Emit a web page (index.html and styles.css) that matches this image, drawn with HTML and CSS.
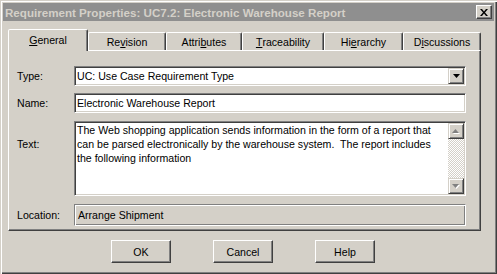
FILE: index.html
```html
<!DOCTYPE html>
<html>
<head>
<meta charset="utf-8">
<title>Requirement Properties</title>
<link rel="stylesheet" href="styles.css">
</head>
<body>
<div class="window">
  <div class="titlebar">
    <span class="title">Requirement Properties: UC7.2: Electronic Warehouse Report</span>
    <span class="close-btn">
      <svg width="8" height="7" viewBox="0 0 8 7"><path d="M0 0h2l2 2.5 2-2.5h2l-3 3.5 3 3.5h-2l-2-2.5-2 2.5h-2l3-3.5z" fill="#000"/></svg>
    </span>
  </div>
  <div class="tabs">
    <div class="tab tab--active tab--general"><span class="u">G</span>eneral</div>
    <div class="tab tab--revision">Re<span class="u">v</span>ision</div>
    <div class="tab tab--attributes">Attri<span class="u">b</span>utes</div>
    <div class="tab tab--traceability"><span class="u">T</span>raceability</div>
    <div class="tab tab--hierarchy">Hi<span class="u">e</span>rarchy</div>
    <div class="tab tab--discussions">D<span class="u">i</span>scussions</div>
  </div>
  <div class="panel">
    <div class="row row--type">
      <span class="label">Type:</span>
      <div class="field combo">
        <span class="combo-text">UC: Use Case Requirement Type</span>
        <span class="arrow-btn">
          <svg width="7" height="4" viewBox="0 0 7 4"><path d="M0 0h7l-3.5 4z" fill="#000"/></svg>
        </span>
      </div>
    </div>
    <div class="row">
      <span class="label">Name:</span>
      <div class="field input">Electronic Warehouse Report</div>
    </div>
    <div class="row row--text">
      <span class="label label--text">Text:</span>
      <div class="field memo">
        <div class="memo-body">
          <div>The Web shopping application sends information in the form of a report that</div>
          <div>can be parsed electronically by the warehouse system.&nbsp; The report includes</div>
          <div>the following information</div>
        </div>
        <div class="scrollbar">
          <span class="arrow-btn arrow-btn--scroll">
            <svg width="8" height="5" viewBox="0 0 8 5"><path d="M1 5h7l-3.5-4z" fill="#fff"/><path d="M0 4h7l-3.5-4z" fill="#808080"/></svg>
          </span>
          <span class="track"></span>
          <span class="arrow-btn arrow-btn--scroll">
            <svg width="8" height="5" viewBox="0 0 8 5"><path d="M1 1h7l-3.5 4z" fill="#fff"/><path d="M0 0h7l-3.5 4z" fill="#808080"/></svg>
          </span>
        </div>
      </div>
    </div>
    <div class="row">
      <span class="label">Location:</span>
      <div class="static">Arrange Shipment</div>
    </div>
  </div>
  <div class="buttons">
    <button class="btn">OK</button>
    <button class="btn">Cancel</button>
    <button class="btn">Help</button>
  </div>
</div>
</body>
</html>
```
FILE: styles.css
```css
html, body {
  margin: 0;
  background: #d4d0c8;
}
body {
  font-family: "Liberation Sans", Arial, sans-serif;
  font-size: 10.6px;
  color: #000;
}
.window {
  width: 497px;
  height: 274px;
  box-sizing: border-box;
  padding: 3px;
  background: #d4d0c8;
  box-shadow: inset 1px 1px #d4d0c8, inset 2px 2px #fff, inset -1px -1px #404040, inset -2px -2px #808080;
  display: flex;
  flex-direction: column;
}
.titlebar {
  height: 18px;
  background: #8f8f8f;
  display: flex;
  align-items: center;
  padding: 0 2px 0 2px;
}
.title {
  flex: 1;
  font-weight: bold;
  font-size: 11.6px;
  color: #d4d0c8;
  white-space: nowrap;
}
.close-btn {
  width: 16px;
  height: 14px;
  box-sizing: border-box;
  background: #d4d0c8;
  border: 1px solid;
  border-color: #fff #404040 #404040 #fff;
  box-shadow: inset -1px -1px #808080;
  display: flex;
  align-items: center;
  justify-content: center;
}
.tabs {
  display: flex;
  align-items: flex-end;
  height: 21px;
  margin: 8px 0 0 5px;
}
.tab {
  height: 18px;
  box-sizing: border-box;
  border: 1px solid;
  border-bottom: none;
  border-color: #fff #404040 transparent #fff;
  box-shadow: inset -1px 0 #808080;
  border-radius: 2px 2px 0 0;
  display: flex;
  align-items: center;
  justify-content: center;
  padding-top: 1px;
  white-space: nowrap;
}
.tab--active {
  height: 22px;
  margin-bottom: -1px;
  position: relative;
  z-index: 1;
  background: #d4d0c8;
  padding-top: 0;
  padding-bottom: 2px;
}
.tab--general { width: 80px; }
.tab--revision { width: 78px; }
.tab--attributes { width: 76px; }
.tab--traceability { width: 82px; }
.tab--hierarchy { width: 79px; }
.tab--discussions { width: 78px; }
.u { text-decoration: underline; }
.panel {
  margin-left: 5px;
  width: 473px;
  height: 181px;
  box-sizing: border-box;
  border: 1px solid;
  border-color: #fff #404040 #404040 #fff;
  box-shadow: inset -1px -1px #808080;
  padding: 15px 0 0 8px;
  display: flex;
  flex-direction: column;
  gap: 8px;
}
.row {
  display: flex;
  align-items: center;
}
.row--type { margin-bottom: -1px; }
.row--text { align-items: flex-start; }
.label {
  width: 57px;
  flex: none;
}
.label--text {
  padding-top: 16px;
  line-height: 14px;
}
.field {
  width: 392px;
  box-sizing: border-box;
  border: 1px solid;
  border-color: #808080 #fff #fff #808080;
  box-shadow: inset 1px 1px #404040, inset -1px -1px #d4d0c8;
  background: #fff;
  padding: 1px;
}
.combo {
  height: 20px;
  display: flex;
  align-items: center;
}
.combo-text {
  flex: 1;
  padding-left: 1px;
  white-space: nowrap;
}
.arrow-btn {
  width: 16px;
  height: 16px;
  box-sizing: border-box;
  background: #d4d0c8;
  border: 1px solid;
  border-color: #d4d0c8 #404040 #404040 #d4d0c8;
  box-shadow: inset 1px 1px #fff, inset -1px -1px #808080;
  display: flex;
  align-items: center;
  justify-content: center;
  flex: none;
}
.input {
  height: 20px;
  display: flex;
  align-items: center;
  padding-left: 2px;
  white-space: nowrap;
}
.memo {
  height: 75px;
  display: flex;
}
.memo-body {
  flex: 1;
  line-height: 14px;
  padding-left: 1px;
  white-space: nowrap;
  overflow: hidden;
}
.scrollbar {
  width: 16px;
  display: flex;
  flex-direction: column;
}
.track {
  flex: 1;
  background: repeating-conic-gradient(#fff 0 25%, #d4d0c8 0 50%) 0 0 / 2px 2px;
}
.static {
  width: 392px;
  height: 22px;
  box-sizing: border-box;
  border: 1px solid;
  border-color: #808080 #fff #fff #808080;
  box-shadow: inset 1px 1px #fff, inset -1px -1px #808080;
  display: flex;
  align-items: center;
  padding-left: 3px;
  white-space: nowrap;
}
.buttons {
  display: flex;
  gap: 42px;
  margin: 9px 0 0 108px;
}
.btn {
  width: 60px;
  height: 23px;
  box-sizing: border-box;
  font: inherit;
  color: #000;
  background: #d4d0c8;
  border: 1px solid;
  border-color: #fff #404040 #404040 #fff;
  box-shadow: inset -1px -1px #808080;
  padding: 0;
}
```
